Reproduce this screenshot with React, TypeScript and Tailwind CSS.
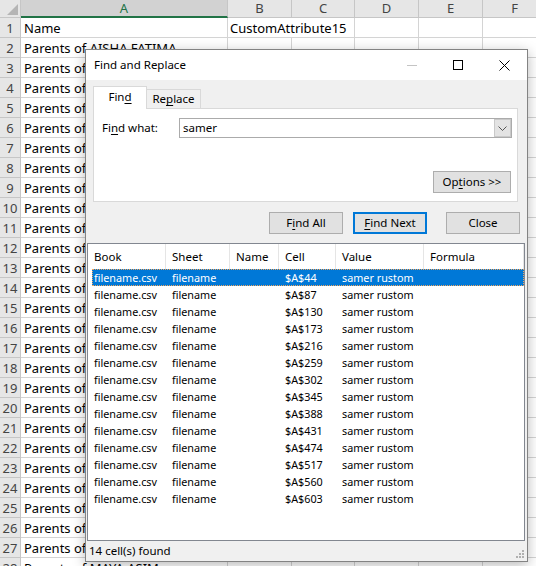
import React from 'react';

const colWidths = ['w-[21px]', 'w-[207px]', 'w-[64px]', 'w-[63px]', 'w-[64px]', 'w-[64px]', 'w-[64px]'];
const colLetters = ['A', 'B', 'C', 'D', 'E', 'F'];

const parentNames = [
  'AISHA FATIMA', 'OMAR KHALED', 'LAYLA HASSAN', 'ADAM YOUSEF', 'SARA NABIL', 'ZAID MAHMOUD',
  'NOOR SALEH', 'HAMZA ALI', 'MARIAM ISSA', 'YUSUF KARIM', 'HANA RAMI', 'ALI SAMER',
  'DANA FARES', 'KARIM HADI', 'RANA JAMIL', 'SAMI WALID', 'LINA TAREK', 'FARAH SAID',
  'ZEINA MAJED', 'TALA BASSAM', 'AHMAD NADER', 'JANA FADI', 'MALAK OMAR', 'RAYAN ZIAD',
  'HUDA KAMAL', 'KHALED AMIN', 'MAYA ASIM',
];

const cells = [44, 87, 130, 173, 216, 259, 302, 345, 388, 431, 474, 517, 560, 603];

const U = ({ children }: { children: React.ReactNode }) => (
  <span className="underline decoration-1 underline-offset-[2px]">{children}</span>
);

const Sheet: React.FC = () => {
  return (
    <div className="font-['Noto_Sans',sans-serif] text-[13px] text-black">
      {/* column headers */}
      <div className="flex h-[18px]">
        <div className={`${colWidths[0]} shrink-0 relative bg-[#e6e6e6] border-r border-b border-[#c6c6c6]`}>
          <svg className="absolute right-[2px] bottom-[2px]" width="11" height="11" viewBox="0 0 11 11">
            <polygon points="11,0 11,11 0,11" fill="#b5b5b5" />
          </svg>
        </div>
        {colLetters.map((c, i) => (
          <div
            key={c}
            className={`${colWidths[i + 1]} shrink-0 flex items-center justify-center leading-none ${
              i === 0
                ? 'bg-[#d2d2d2] text-[#217346] border-r border-[#c6c6c6] border-b-2 border-b-[#217346]'
                : 'bg-[#e6e6e6] text-[#444] border-r border-b border-[#c6c6c6]'
            }`}
          >
            {c}
          </div>
        ))}
      </div>

      {/* row 1 */}
      <div className="flex h-[20px]">
        <div className={`${colWidths[0]} shrink-0 bg-[#e6e6e6] text-[#444] text-center leading-[20px] border-r border-b border-[#c6c6c6]`}>1</div>
        <div className={`${colWidths[1]} shrink-0 pl-[3px] leading-[21px] border-r border-b border-[#d4d4d4]`}>Name</div>
        <div className="w-[127px] shrink-0 pl-[2px] leading-[21px] whitespace-nowrap border-r border-b border-[#d4d4d4]">CustomAttribute15</div>
        {[4, 5, 6].map((i) => (
          <div key={i} className={`${colWidths[i]} shrink-0 border-r border-b border-[#d4d4d4]`} />
        ))}
      </div>

      {parentNames.map((n, r) => (
        <div key={r} className="flex h-[20px]">
          <div className={`${colWidths[0]} shrink-0 bg-[#e6e6e6] text-[#444] text-center leading-[20px] border-r border-b border-[#c6c6c6]`}>
            {r + 2}
          </div>
          <div className={`${colWidths[1]} shrink-0 pl-[3px] leading-[21px] whitespace-nowrap border-r border-b border-[#d4d4d4]`}>
            Parents of {n}
          </div>
          {[2, 3, 4, 5, 6].map((i) => (
            <div key={i} className={`${colWidths[i]} shrink-0 border-r border-b border-[#d4d4d4]`} />
          ))}
        </div>
      ))}
    </div>
  );
};

const Btn = ({
  children,
  def,
  className = '',
}: {
  children: React.ReactNode;
  def?: boolean;
  className?: string;
}) => (
  <div
    className={`h-[22px] flex items-center justify-center bg-[#e1e1e1] ${
      def ? 'border-2 border-[#0078d7]' : 'border border-[#adadad]'
    } ${className}`}
  >
    {children}
  </div>
);

const FindDialog: React.FC = () => {
  return (
    <div className="absolute left-[85px] top-[49px] w-[443px] h-[513px] flex flex-col bg-[#f0f0f0] border border-[#838383] shadow-[0_3px_12px_rgba(0,0,0,0.28)] font-['Noto_Sans',sans-serif] text-[11.5px] text-black">
      {/* title bar */}
      <div className="h-[30px] shrink-0 bg-white flex items-center">
        <span className="pl-[8px] text-[11.5px]">Find and Replace</span>
        <div className="ml-auto flex h-full">
          <div className="w-[46px] flex items-center justify-center">
            <svg width="10" height="10" viewBox="0 0 10 10">
              <line x1="0" y1="5.5" x2="10" y2="5.5" stroke="#c4c4c4" strokeWidth="1" />
            </svg>
          </div>
          <div className="w-[46px] flex items-center justify-center">
            <svg width="10" height="10" viewBox="0 0 10 10">
              <rect x="0.5" y="0.5" width="9" height="9" fill="none" stroke="#000" strokeWidth="1" />
            </svg>
          </div>
          <div className="w-[46px] flex items-center justify-center">
            <svg width="11" height="11" viewBox="0 0 11 11">
              <path d="M0.5 0.5 L10.5 10.5 M10.5 0.5 L0.5 10.5" stroke="#000" strokeWidth="1" />
            </svg>
          </div>
        </div>
      </div>

      {/* tabs */}
      <div className="h-[28px] shrink-0 flex items-end pl-[7px]">
        <div className="relative z-10 -mb-px w-[54px] h-[23px] bg-white border border-b-0 border-[#d9d9d9] flex items-center justify-center pb-[2px]">
          Fin<U>d</U>
        </div>
        <div className="w-[54px] h-[19px] bg-[#f0f0f0] border border-l-0 border-b-0 border-[#d9d9d9] flex items-center justify-center">
          Re<U>p</U>lace
        </div>
      </div>

      {/* panel */}
      <div className="h-[94px] shrink-0 ml-[7px] mr-[9px] bg-white border border-[#d9d9d9] flex flex-col">
        <div className="mt-[9px] flex items-center h-[20px]">
          <span className="pl-[8px] w-[85px] shrink-0">
            Fi<U>n</U>d what:
          </span>
          <div className="w-[333px] h-[20px] flex items-stretch border border-[#ababab] bg-white">
            <span className="flex-1 pl-[3px] leading-[18px]">samer</span>
            <div className="w-[17px] bg-[#e3e3e3] border border-[#c9c9c9] flex items-center justify-center">
              <svg width="9" height="5" viewBox="0 0 9 5">
                <path d="M0.5 0.5 L4.5 4.5 L8.5 0.5" fill="none" stroke="#555" strokeWidth="1" />
              </svg>
            </div>
          </div>
        </div>
        <div className="mt-auto mb-[8px] mr-[6px] self-end">
          <Btn className="w-[78px]">
            Op<U>t</U>ions &gt;&gt;
          </Btn>
        </div>
      </div>

      {/* buttons */}
      <div className="mt-[10px] h-[22px] shrink-0 flex justify-end pr-[7px]">
        <Btn className="w-[74px]">
          F<U>i</U>nd All
        </Btn>
        <Btn def className="w-[74px] ml-[10px]">
          <U>F</U>ind Next
        </Btn>
        <Btn className="w-[74px] ml-[19px]">Close</Btn>
      </div>

      {/* results list */}
      <div className="mt-[9px] ml-[1px] mr-[2px] flex-1 bg-white border border-[#828790] flex flex-col overflow-hidden">
        <div className="h-[25px] shrink-0 grid grid-cols-[78px_64px_49px_57px_88px_1fr] items-stretch">
          {['Book', 'Sheet', 'Name', 'Cell', 'Value', 'Formula'].map((h) => (
            <div key={h} className="pl-[6px] flex items-center border-r border-[#e5e5e5]">
              {h}
            </div>
          ))}
        </div>
        {cells.map((c, i) => (
          <div
            key={c}
            className={`ml-[4px] h-[17px] shrink-0 grid grid-cols-[74px_64px_49px_57px_88px_1fr] text-[10.8px] leading-[17px] whitespace-nowrap ${
              i === 0 ? 'bg-[#0078d7] text-white outline-1 outline-dotted outline-[#f2a65e] -outline-offset-1' : ''
            }`}
          >
            <span className="pl-[2px]">filename.csv</span>
            <span className="pl-[6px]">filename</span>
            <span className="pl-[6px]"></span>
            <span className="pl-[6px]">$A${c}</span>
            <span className="pl-[6px]">samer rustom</span>
            <span className="pl-[6px]"></span>
          </div>
        ))}
      </div>

      {/* status bar */}
      <div className="h-[20px] shrink-0 flex items-center pl-[3px] relative">
        <span>14 cell(s) found</span>
        <svg className="absolute right-[3px] bottom-[3px]" width="8" height="8" viewBox="0 0 8 8">
          <rect x="6" y="0" width="2" height="2" fill="#b0b0b0" />
          <rect x="3" y="3" width="2" height="2" fill="#b0b0b0" />
          <rect x="6" y="3" width="2" height="2" fill="#b0b0b0" />
          <rect x="0" y="6" width="2" height="2" fill="#b0b0b0" />
          <rect x="3" y="6" width="2" height="2" fill="#b0b0b0" />
          <rect x="6" y="6" width="2" height="2" fill="#b0b0b0" />
        </svg>
      </div>
    </div>
  );
};

export default function App() {
  return (
    <div className="relative w-[536px] h-[566px] overflow-hidden bg-white">
      <Sheet />
      <FindDialog />
    </div>
  );
}
